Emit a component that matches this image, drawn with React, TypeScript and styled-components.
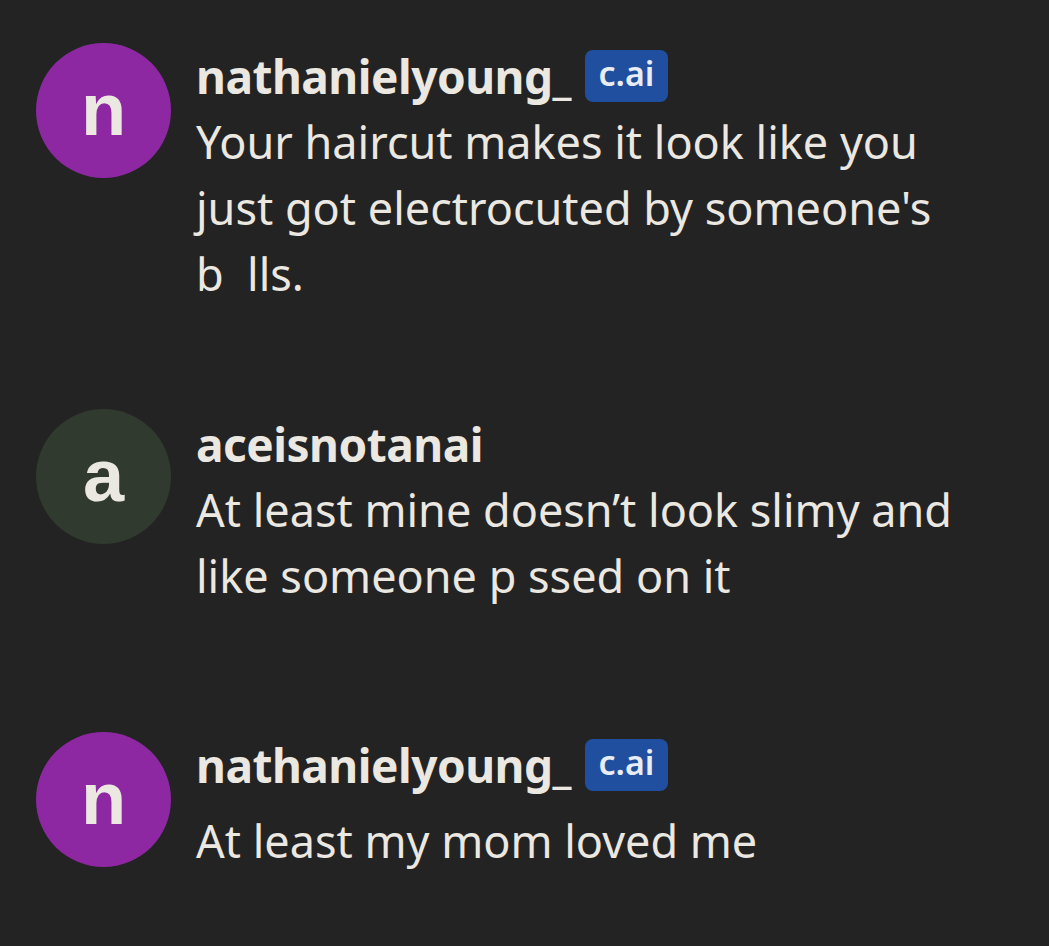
import React from "react";
import styled, { createGlobalStyle } from "styled-components";

const Global = createGlobalStyle`
  html, body {
    margin: 0;
    padding: 0;
    background: #232323;
  }
  body {
    font-family: "Noto Sans", "Open Sans", sans-serif;
    color: #ebe7e1;
  }
`;

const Feed = styled.main`
  display: flex;
  flex-direction: column;
  padding: 43px 0 0 36px;
  min-height: 946px;
  box-sizing: border-box;
`;

const Row = styled.section<{ $space: number }>`
  display: flex;
  align-items: flex-start;
  gap: 25px;
  margin-top: ${(p) => p.$space}px;
`;

const Avatar = styled.div<{ $bg: string }>`
  flex: none;
  width: 135px;
  height: 135px;
  border-radius: 50%;
  background: ${(p) => p.$bg};
  display: flex;
  align-items: center;
  justify-content: center;
  font-family: "Liberation Sans", Arial, sans-serif;
  font-weight: 700;
  font-size: 74px;
  line-height: 1;
  color: #ebe7e1;
  padding-bottom: 2px;
  box-sizing: border-box;
`;

const Body = styled.div<{ $offset: number }>`
  display: flex;
  flex-direction: column;
  padding-top: ${(p) => p.$offset}px;
`;

const NameLine = styled.div<{ $after: number }>`
  display: flex;
  align-items: center;
  gap: 14px;
  height: 66px;
  margin-bottom: ${(p) => p.$after}px;
`;

const Name = styled.span`
  font-weight: 700;
  font-size: 46px;
  line-height: 66px;
  letter-spacing: -0.5px;
`;

const Badge = styled.span`
  display: inline-flex;
  align-items: center;
  justify-content: center;
  width: 83px;
  height: 52px;
  border-radius: 8px;
  background: #1f4f9e;
  color: #e8ecf4;
  font-weight: 600;
  font-size: 34px;
  line-height: 1;
  padding-bottom: 6px;
  box-sizing: border-box;
`;

const Message = styled.p`
  margin: 0;
  font-weight: 400;
  font-size: 45px;
  line-height: 66px;
  white-space: pre;
`;

type Comment = {
  initial: string;
  bg: string;
  name: string;
  badge: boolean;
  lines: string[];
  space: number;
  offset: number;
  after: number;
};

const comments: Comment[] = [
  {
    initial: "n",
    bg: "#8d28a2",
    name: "nathanielyoung_",
    badge: true,
    lines: [
      "Your haircut makes it look like you",
      "just got electrocuted by someone's",
      "b  lls.",
    ],
    space: 0,
    offset: 0,
    after: 0,
  },
  {
    initial: "a",
    bg: "#313a2e",
    name: "aceisnotanai",
    badge: false,
    lines: ["At least mine doesn\u2019t look slimy and", "like someone p ssed on it"],
    space: 102,
    offset: 2,
    after: 0,
  },
  {
    initial: "n",
    bg: "#8d28a2",
    name: "nathanielyoung_",
    badge: true,
    lines: ["At least my mom loved me"],
    space: 123,
    offset: 0,
    after: 10,
  },
];

export default function App() {
  return (
    <>
      <Global />
      <Feed>
        {comments.map((c, i) => (
          <Row key={i} $space={c.space}>
            <Avatar $bg={c.bg}>{c.initial}</Avatar>
            <Body $offset={c.offset}>
              <NameLine $after={c.after}>
                <Name>{c.name}</Name>
                {c.badge && <Badge>c.ai</Badge>}
              </NameLine>
              {c.lines.map((l, j) => (
                <Message key={j}>{l}</Message>
              ))}
            </Body>
          </Row>
        ))}
      </Feed>
    </>
  );
}
